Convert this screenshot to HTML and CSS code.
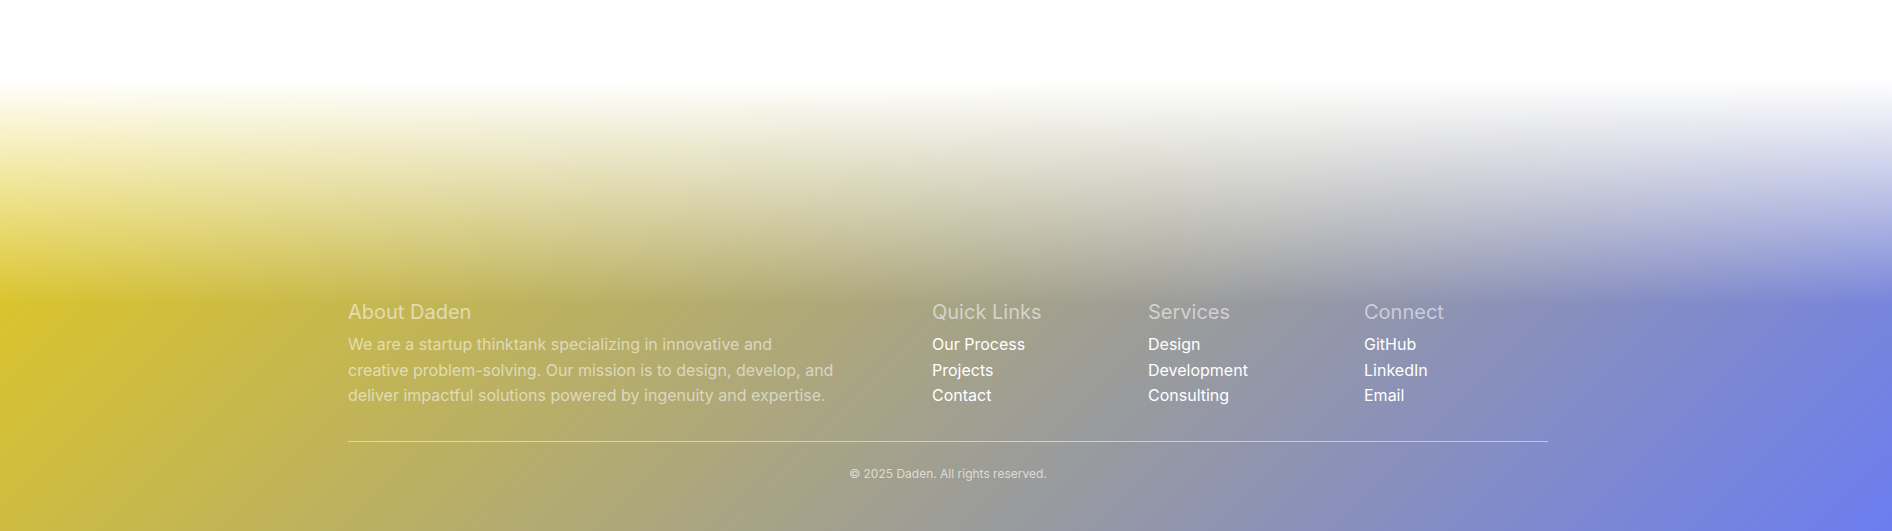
FILE: index.html
```html
<!DOCTYPE html>
<html lang="en">
<head>
<meta charset="utf-8">
<title>Daden</title>
<link rel="stylesheet" href="styles.css">
</head>
<body>
<footer class="footer">
  <div class="footer-inner">
    <div class="footer-grid">
      <section>
        <h2 class="footer-title">About Daden</h2>
        <p class="footer-about">We are a startup thinktank specializing in innovative and<br>creative problem-solving. Our mission is to design, develop, and<br>deliver impactful solutions powered by ingenuity and expertise.</p>
      </section>
      <nav aria-labelledby="quick-links">
        <h2 class="footer-title" id="quick-links">Quick Links</h2>
        <ul class="footer-links">
          <li><a href="#process">Our Process</a></li>
          <li><a href="#projects">Projects</a></li>
          <li><a href="#contact">Contact</a></li>
        </ul>
      </nav>
      <nav aria-labelledby="services">
        <h2 class="footer-title" id="services">Services</h2>
        <ul class="footer-links">
          <li><a href="#design">Design</a></li>
          <li><a href="#development">Development</a></li>
          <li><a href="#consulting">Consulting</a></li>
        </ul>
      </nav>
      <nav aria-labelledby="connect">
        <h2 class="footer-title" id="connect">Connect</h2>
        <ul class="footer-links">
          <li><a href="#github">GitHub</a></li>
          <li><a href="#linkedin">LinkedIn</a></li>
          <li><a href="#email">Email</a></li>
        </ul>
      </nav>
    </div>
    <p class="footer-copy">© 2025 Daden. All rights reserved.</p>
  </div>
</footer>
</body>
</html>
```
FILE: styles.css
```css
* { box-sizing: border-box; }
body {
  margin: 0;
  padding-top: 80px;
  background: #fff;
  font-family: Inter, "Liberation Sans", sans-serif;
  font-size: 16px;
  line-height: 1.6;
  color: #fff;
}
.footer {
  padding: 216px 24px 50px 28px;
  background:
    linear-gradient(to bottom, #fff 0, rgba(255, 255, 255, 0) 225px),
    linear-gradient(135deg, #e5cb18, #6b7df0);
}
.footer-inner { max-width: 1200px; margin: 0 auto; }
.footer-grid {
  display: grid;
  grid-template-columns: 3fr 1fr 1fr 1fr;
  gap: 32px;
  padding-bottom: 32px;
}
.footer-title {
  margin: 0 0 4px;
  font-size: 20px;
  line-height: 32px;
  font-weight: 400;
  color: rgba(255, 255, 255, 0.55);
}
.footer-about { margin: 0; color: rgba(255, 255, 255, 0.55); }
.footer-links { margin: 0; padding: 0; list-style: none; }
.footer-links a { color: #fff; text-decoration: none; }
.footer-copy {
  margin: 0;
  padding-top: 24px;
  border-top: 1px solid rgba(255, 255, 255, 0.5);
  font-size: 12px;
  line-height: 16px;
  text-align: center;
  color: rgba(255, 255, 255, 0.65);
}
```
